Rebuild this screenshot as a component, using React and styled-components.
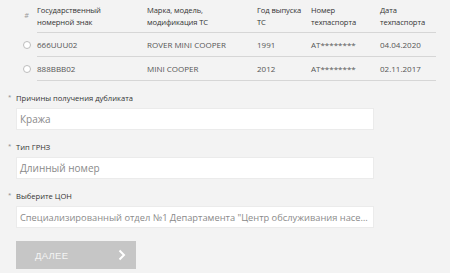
import * as React from 'react'
import styled, { createGlobalStyle } from 'styled-components'

const GlobalStyle = createGlobalStyle`
    html, body {
        margin: 0;
        padding: 0;
        background: #f3f3f3;
        font-family: "Open Sans", "Noto Sans", sans-serif;
    }
`

const cars = [
    { plate: '666UUU02', model: 'ROVER MINI COOPER', year: '1991', passport: 'AT********', date: '04.04.2020' },
    { plate: '888BBB02', model: 'MINI COOPER', year: '2012', passport: 'AT********', date: '02.11.2017' },
]

const fields = [
    { label: 'Причины получения дубликата', value: 'Кража' },
    { label: 'Тип ГРНЗ', value: 'Длинный номер' },
    { label: 'Выберите ЦОН', value: 'Специализированный отдел №1 Департамента "Центр обслуживания насе…' },
]

// Layout
const StyledPage = styled.div`
    width: 450px;
    height: 273px;
    padding: 0 0 0 8px;
    box-sizing: border-box;
    overflow: hidden;
`

const StyledTable = styled.div`
    display: grid;
    grid-template-columns: 29px 110px 110px 54px 69px 56px;
    width: 428px;
`

const StyledCell = styled.div`
    display: flex;
    align-items: center;
    font-size: ${(props) => (props.head ? '7.6px' : '8px')};
    line-height: ${(props) => (props.head ? '12.5px' : '12px')};
    color: ${(props) => (props.head ? '#333' : '#555')};
    height: ${(props) => (props.head ? '32px' : '23px')};
    border-bottom: ${(props) => (props.first ? 'none' : '1px solid #d6d6d6')};
    letter-spacing: ${(props) => (props.head ? '-0.1px' : '0')};
    justify-content: ${(props) => (props.first ? 'center' : 'flex-start')};
    white-space: nowrap;
`

const StyledHash = styled.span`
    color: #999;
    font-size: 7px;
    font-style: italic;
    padding-left: 8px;
`

const StyledRadio = styled.span`
    width: 6px;
    height: 6px;
    border-radius: 50%;
    border: 1px solid #bdbdbd;
    background: #fff;
    margin-left: 8px;
`

const StyledForm = styled.div`
    display: flex;
    flex-direction: column;
    gap: 11px;
    padding-top: 11px;
`

const StyledField = styled.div`
    display: flex;
    flex-direction: column;
    gap: 4px;
`

const StyledLabel = styled.label`
    display: flex;
    align-items: center;
    height: 12px;
    font-size: 7.6px;
    color: #333;

    &::before {
        content: '*';
        font-size: 6px;
        color: #888;
        width: 8px;
        align-self: flex-start;
        margin-top: 1px;
    }
`

const StyledInput = styled.div`
    margin-left: 8px;
    width: 358px;
    height: 22px;
    box-sizing: border-box;
    background: #fff;
    border: 1px solid #ebebeb;
    display: flex;
    align-items: center;
    padding-left: 3px;
    font-size: ${(props) => (props.small ? '9.3px' : '10px')};
    color: #8a8a8a;
    white-space: nowrap;
    overflow: hidden;
`

const StyledButton = styled.button`
    margin: 13px 0 0 8px;
    width: 120px;
    height: 28px;
    border: none;
    background: #c6c6c6;
    color: #f4f4f4;
    font-family: "Liberation Sans", Arial, sans-serif;
    font-size: 9.5px;
    letter-spacing: 0.3px;
    display: flex;
    align-items: center;
    justify-content: space-between;
    padding: 0 10px 0 19px;
    box-sizing: border-box;
`

const App = () => {
    return (
        <StyledPage>
            <GlobalStyle />
            <StyledTable>
                <StyledCell head first><StyledHash>#</StyledHash></StyledCell>
                <StyledCell head>Государственный<br />номерной знак</StyledCell>
                <StyledCell head>Марка, модель,<br />модификация ТС</StyledCell>
                <StyledCell head>Год выпуска<br />ТС</StyledCell>
                <StyledCell head>Номер<br />техпаспорта</StyledCell>
                <StyledCell head>Дата<br />техпаспорта</StyledCell>
                {cars.map((car) => (
                    <React.Fragment key={car.plate}>
                        <StyledCell first><StyledRadio /></StyledCell>
                        <StyledCell>{car.plate}</StyledCell>
                        <StyledCell>{car.model}</StyledCell>
                        <StyledCell>{car.year}</StyledCell>
                        <StyledCell>{car.passport}</StyledCell>
                        <StyledCell>{car.date}</StyledCell>
                    </React.Fragment>
                ))}
            </StyledTable>

            <StyledForm>
                {fields.map((field, i) => (
                    <StyledField key={field.label}>
                        <StyledLabel>{field.label}</StyledLabel>
                        <StyledInput small={i === 2}>{field.value}</StyledInput>
                    </StyledField>
                ))}
            </StyledForm>

            <StyledButton type="button">
                ДАЛЕЕ
                <svg width="8" height="12" viewBox="0 0 8 12">
                    <path d="M1.5 1.5 L6 6 L1.5 10.5" fill="none" stroke="#fff" strokeWidth="2" />
                </svg>
            </StyledButton>
        </StyledPage>
    )
}

export default App
